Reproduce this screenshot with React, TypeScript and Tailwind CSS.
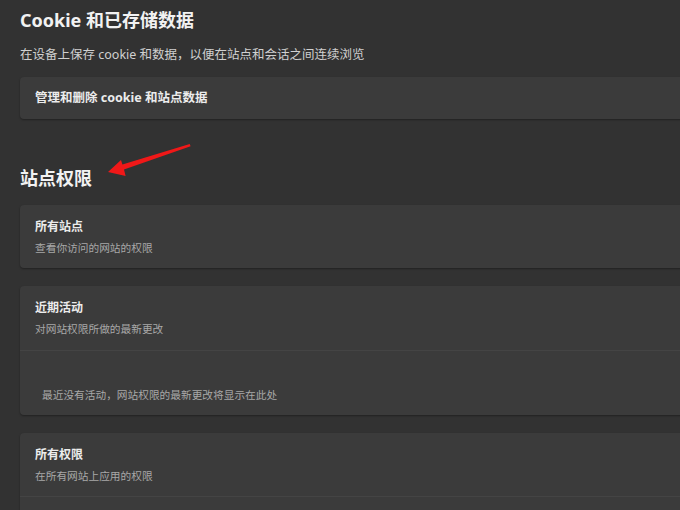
import React from "react";

const font = { fontFamily: '"Noto Sans", "Noto Sans CJK SC", sans-serif' };

function Arrow() {
  return (
    <svg className="absolute left-0 top-0 pointer-events-none" width="680" height="510" viewBox="0 0 680 510">
      <polygon
        points="108,172 121,160 122.4,164.6 189.7,144 190.6,146.2 124,169.4 125.6,176"
        fill="#f01818"
      />
    </svg>
  );
}

export default function App() {
  return (
    <div className="relative w-[680px] h-[510px] overflow-hidden bg-[#323232] pl-5" style={font}>
      <h1 className="pt-2 text-[18px] leading-[24px] font-bold text-[#f2f2f2]">Cookie 和已存储数据</h1>
      <p className="mt-[15px] text-[12.5px] leading-[16px] text-[#d0d0d0]">
        在设备上保存 cookie 和数据，以便在站点和会话之间连续浏览
      </p>
      <div className="mt-[14px] w-[700px] h-[42px] flex items-center px-[15px] rounded bg-[#3b3b3b] shadow-[0_1px_2px_rgba(0,0,0,0.35)]">
        <span className="text-[12.5px] font-bold text-[#ececec]">管理和删除 cookie 和站点数据</span>
      </div>

      <h2 className="mt-[47px] text-[18px] leading-[24px] font-bold text-[#f2f2f2]">站点权限</h2>

      <div className="mt-[15px] w-[700px] rounded bg-[#3b3b3b] shadow-[0_1px_2px_rgba(0,0,0,0.35)] px-[15px] pt-[13px] pb-[12px]">
        <div className="text-[12px] leading-[18px] font-bold text-[#ececec]">所有站点</div>
        <div className="mt-1 text-[10.7px] leading-[16px] text-[#a8a8a8]">查看你访问的网站的权限</div>
      </div>

      <div className="mt-[18px] w-[700px] rounded bg-[#3b3b3b] shadow-[0_1px_2px_rgba(0,0,0,0.35)]">
        <div className="px-[15px] pt-[13px] pb-[13px]">
          <div className="text-[12px] leading-[18px] font-bold text-[#ececec]">近期活动</div>
          <div className="mt-1 text-[10.7px] leading-[16px] text-[#a8a8a8]">对网站权限所做的最新更改</div>
        </div>
        <div className="h-px bg-[#444444]" />
        <div className="pl-[22px] pt-[36px] pb-[12px] text-[10.7px] leading-[16px] text-[#a8a8a8]">
          最近没有活动，网站权限的最新更改将显示在此处
        </div>
      </div>

      <div className="mt-[18px] w-[700px] rounded bg-[#3b3b3b] shadow-[0_1px_2px_rgba(0,0,0,0.35)]">
        <div className="px-[15px] pt-[13px] pb-[12px]">
          <div className="text-[12px] leading-[18px] font-bold text-[#ececec]">所有权限</div>
          <div className="mt-1 text-[10.7px] leading-[16px] text-[#a8a8a8]">在所有网站上应用的权限</div>
        </div>
        <div className="h-px bg-[#444444]" />
        <div className="h-[60px]" />
      </div>

      <Arrow />
    </div>
  );
}
